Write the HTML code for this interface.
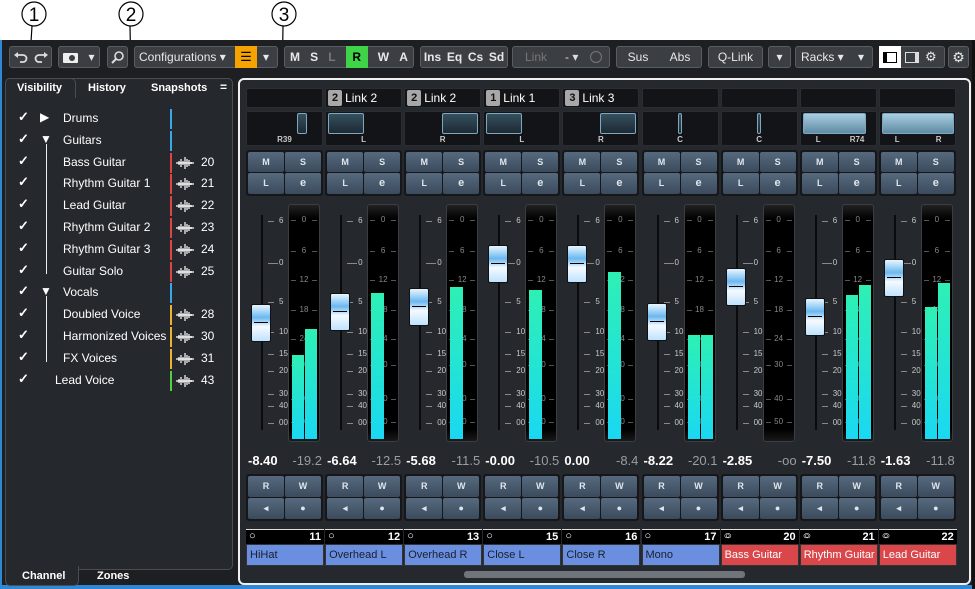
<!DOCTYPE html>
<html><head><meta charset="utf-8"><style>
*{box-sizing:border-box;margin:0;padding:0}
body{width:975px;height:589px;background:#fff;position:relative;overflow:hidden;font-family:"Liberation Sans",sans-serif;font-size:12px;color:#fff}
.a{position:absolute}
.tb{position:absolute;top:46px;height:22px;background:#3b3e43;border:1px solid #595c61;border-radius:3px;font-size:12px;color:#e8e8e8;display:flex;align-items:center;justify-content:center}
.bold{font-weight:bold}
.box{position:absolute;background:#121417;border:1px solid #2a2d31;border-radius:2px}
.btn4{position:absolute;border:1px solid #15171a;border-radius:3px;background:#15171a;display:grid;grid-template-columns:1fr 1fr;gap:1px;padding:1px}
.btn4 div{background:linear-gradient(#56697e,#3b4b5c);color:#dfe5ec;font-size:9px;font-weight:bold;display:flex;align-items:center;justify-content:center;border-radius:2px}
.lbl{position:absolute;font-size:8px;color:#c8c8c8}
</style></head><body>
<svg class="a" style="left:0;top:0" width="975" height="95">
<g fill="none" stroke="#000" stroke-width="1.2">
<circle cx="34" cy="14" r="12"/><circle cx="131" cy="14" r="12"/><circle cx="284" cy="14" r="12"/>
<line x1="32" y1="26" x2="31" y2="42"/><line x1="130" y1="26" x2="131" y2="80"/><line x1="283" y1="26" x2="282" y2="89"/></g>
<g fill="#000"><circle cx="31" cy="43" r="2.5"/><circle cx="131" cy="80" r="2.5"/><circle cx="282" cy="89" r="2.5"/></g>
<g font-family="Liberation Sans" font-size="19" text-anchor="middle"><text x="34" y="21">1</text><text x="131" y="21">2</text><text x="284" y="21">3</text></g>
</svg>
<div class="a" style="left:0;top:40px;width:975px;height:549px;background:#1d1f22"></div>
<div class="a" style="left:0;top:40px;width:2px;height:549px;background:#2f88d6"></div>
<div class="a" style="left:0;top:585px;width:975px;height:4px;background:#2f88d6"></div>
<div class="a" style="left:972px;top:40px;width:3px;height:549px;background:#111"></div>
<div class="tb" style="left:9px;width:43px"><svg width="36" height="14"><g fill="none" stroke="#ddd" stroke-width="1.8"><path d="M4 5h6a3.5 3.5 0 0 1 0 7H7"/><path d="M32 5h-6a3.5 3.5 0 0 0 0 7h3"/></g><path d="M1 5l4-3v6z M35 5l-4-3v6z" fill="#ddd"/></svg></div>
<div class="tb" style="left:58px;width:42px"><svg width="15" height="11"><rect x="0" y="1" width="15" height="10" rx="1" fill="#eee"/><circle cx="9" cy="6" r="3" fill="#3b3e43"/></svg>&nbsp;&nbsp;&nbsp;▾</div>
<div class="tb" style="left:107px;width:21px"><svg width="14" height="14"><circle cx="8" cy="6" r="4" fill="none" stroke="#ddd" stroke-width="1.6"/><path d="M5 9L1 13" stroke="#ddd" stroke-width="2"/></svg></div>
<div class="tb" style="left:134px;width:144px;justify-content:flex-start;padding-left:4px">Configurations&nbsp;▾<span style="position:absolute;left:100px;top:-1px;width:22px;height:22px;background:#f5a300;color:#000;text-align:center;font-size:13px;line-height:22px">☰</span><span style="position:absolute;left:128px">▾</span></div>
<div class="tb bold" style="left:284px;width:130px;justify-content:space-around">M<span>S</span><span style="color:#777">L</span><span style="background:#3fd447;color:#000;width:22px;text-align:center;line-height:22px">R</span><span>W</span><span>A</span></div>
<div class="tb bold" style="left:420px;width:88px;justify-content:space-around">Ins<span>Eq</span><span>Cs</span><span>Sd</span></div>
<div class="tb" style="left:512px;width:98px;color:#777;justify-content:flex-start;padding-left:12px">Link<span style="margin-left:18px;color:#ddd">-&nbsp;▾</span><span style="margin-left:12px;display:inline-block;width:12px;height:12px;border:1.5px solid #777;border-radius:50%"></span></div>
<div class="tb" style="left:616px;width:86px;justify-content:space-around">Sus<span>Abs</span></div>
<div class="tb" style="left:708px;width:55px">Q-Link</div>
<div class="tb" style="left:768px;width:23px">▾</div>
<div class="tb" style="left:795px;width:78px;justify-content:flex-start;padding-left:5px">Racks&nbsp;▾<span style="position:absolute;left:62px">▾</span></div>
<div class="tb" style="left:879px;width:66px;justify-content:flex-start">
<span style="background:#fff;width:22px;height:22px;margin-left:-1px;display:flex;align-items:center;justify-content:center"><span style="width:14px;height:11px;border:1.5px solid #000;border-left-width:4px"></span></span>
<span style="margin-left:4px;width:14px;height:11px;border:1.5px solid #ddd;border-right-width:4px"></span>
<span style="margin-left:6px;font-size:13px">⚙</span></div>
<div class="tb" style="left:948px;width:21px;font-size:14px">⚙</div>
<div class="a" style="left:5px;top:78px;width:228px;height:492px;background:#25282c;border:1px solid #4a4d52;border-radius:5px"></div>
<div class="a" style="left:5px;top:78px;width:71px;height:20px;background:#25282c;border:1px solid #4a4d52;border-bottom:none;border-radius:5px 5px 0 0"></div>
<div class="a bold" style="left:17px;top:82px;font-size:11px">Visibility</div>
<div class="a bold" style="left:88px;top:82px;font-size:11px">History</div>
<div class="a bold" style="left:151px;top:82px;font-size:11px">Snapshots</div>
<div class="a bold" style="left:220px;top:80px;font-size:12px">=</div>
<div class="a" style="left:5px;top:566px;width:74px;height:20px;background:#25282c;border:1px solid #4a4d52;border-top:none;border-radius:0 0 5px 5px"></div>
<div class="a bold" style="left:22px;top:570px;font-size:11px">Channel</div>
<div class="a bold" style="left:97px;top:570px;font-size:11px">Zones</div>
<div class="a" style="left:46px;top:144px;width:1px;height:130px;background:#eee"></div>
<div class="a" style="left:46px;top:296px;width:1px;height:66px;background:#eee"></div>
<div id="list"></div>
<div class="a" style="left:238px;top:78px;width:733px;height:507px;border:2px solid #f0f0f0;border-radius:6px;background:#25282c"></div>
<div class="a" style="left:464px;top:571px;width:281px;height:7px;background:#70757b;border-radius:3px"></div>
<div id="mix"></div>
<script>
var L=[["Drums",63,"#3aa7e8",null,"▶"],["Guitars",63,"#3aa7e8",null,"▼"],["Bass Guitar",63,"#e04444",20],["Rhythm Guitar 1",63,"#e04444",21],["Lead Guitar",63,"#e04444",22],["Rhythm Guitar 2",63,"#e04444",23],["Rhythm Guitar 3",63,"#e04444",24],["Guitar Solo",63,"#e04444",25],["Vocals",63,"#3aa7e8",null,"▼"],["Doubled Voice",63,"#f0b030",28],["Harmonized Voices",63,"#f0b030",30],["FX Voices",63,"#f0b030",31],["Lead Voice",55,"#50d040",43]];
var h="";
L.forEach(function(r,i){var y=109+i*21.8;
h+='<div class="a" style="left:18px;top:'+y+'px;font-size:13px;font-weight:bold">✓</div>';
if(r[4])h+='<div class="a" style="left:40px;top:'+(y+1)+'px;font-size:12px">'+r[4]+'</div>';
h+='<div class="a" style="left:'+r[1]+'px;top:'+(y+2)+'px;font-size:12px">'+r[0]+'</div>';
h+='<div class="a" style="left:170px;top:'+y+'px;width:2px;height:20px;background:'+r[2]+'"></div>';
if(r[3]){h+='<svg class="a" style="left:176px;top:'+(y+3)+'px" width="18" height="14"><path d="M0 7H18M3 5V9M5 3V11M7 5V9M9 1V13M11 3V11M13 4V10M15 6V8" stroke="#fff" stroke-width="1.2"/></svg>';
h+='<div class="a" style="left:201px;top:'+(y+2)+'px;font-size:12px">'+r[3]+'</div>';}
});
document.getElementById("list").innerHTML=h;
var S=[
{n:"",pan:"R39",cap:304,m:[355,329],v:"-8.40",p:"-19.2",num:11,nm:"HiHat",c:"#6b8fe0",st:0},
{n:"Link 2",lkn:2,pan:"L",cap:293,m:[293],v:"-6.64",p:"-12.5",num:12,nm:"Overhead L",c:"#6b8fe0",st:0},
{n:"Link 2",lkn:2,pan:"R",cap:288,m:[287],v:"-5.68",p:"-11.5",num:13,nm:"Overhead R",c:"#6b8fe0",st:0},
{n:"Link 1",lkn:1,pan:"L",cap:245,m:[290],v:"-0.00",p:"-10.5",num:15,nm:"Close L",c:"#6b8fe0",st:0},
{n:"Link 3",lkn:3,pan:"R",cap:245,m:[272],v:"0.00",p:"-8.4",num:16,nm:"Close R",c:"#6b8fe0",st:0},
{n:"",pan:"C",cap:303,m:[335,335],v:"-8.22",p:"-20.1",num:17,nm:"Mono",c:"#6b8fe0",st:0},
{n:"",pan:"C",cap:268,m:[],v:"-2.85",p:"-oo",num:20,nm:"Bass Guitar",c:"#d9474b",st:1},
{n:"",pan:"L|R74",cap:298,m:[295,285],v:"-7.50",p:"-11.8",num:21,nm:"Rhythm Guitar 1",c:"#d9474b",st:1},
{n:"",pan:"L|R",cap:259,m:[307,283],v:"-1.63",p:"-11.8",num:22,nm:"Lead Guitar",c:"#d9474b",st:1}];
var fs=[["6",221],["0",263],["5",302],["10",332],["15",354],["20",371],["30",394],["40",406],["00",423]];
var ms=[["0",220],["6",251],["12",280],["18",310],["24",339],["30",365],["40",399],["50",422]];
var o="";
S.forEach(function(s,i){var x=246+i*79.1;
o+='<div class="box" style="left:'+x+'px;top:88px;width:77px;height:20px"></div>';
if(s.n)o+='<div class="a" style="left:'+(x+3)+'px;top:90px;width:14px;height:16px;background:#a8a8a8;color:#111;font-size:11px;font-weight:bold;text-align:center;line-height:16px;border-radius:2px">'+s.lkn+'</div><div class="a" style="left:'+(x+20)+'px;top:91px;font-size:12px">'+s.n+'</div>';
o+='<div class="box" style="left:'+x+'px;top:111px;width:77px;height:35px"></div>';
var pw={"R39":[51,10],"L":[3,36],"R":[38,36],"C":[36,4],"L|R74":[3,63],"L|R":[3,72]}[s.pan];
var light=s.pan.indexOf("|")>0;
o+='<div class="a" style="left:'+(x+pw[0])+'px;top:113px;width:'+pw[1]+'px;height:21px;border-radius:2px;border:1px solid #7fa8c0;background:'+(light?'linear-gradient(#a8cde0,#5f8ba4)':'linear-gradient(#35505f,#1d2a33)')+'"></div>';
var pl=s.pan.split("|");
if(pl.length==2)o+='<div class="lbl bold" style="left:'+(x+16)+'px;top:135px">'+pl[0]+'</div><div class="lbl bold" style="left:'+(x+(s.pan=="L|R"?57:50))+'px;top:135px">'+pl[1]+'</div>';
else o+='<div class="lbl bold" style="left:'+x+'px;width:77px;text-align:center;top:135px">'+s.pan+'</div>';
o+='<div class="btn4" style="left:'+x+'px;top:150px;width:77px;height:46px"><div>M</div><div>S</div><div>L</div><div style="font-size:11px">e</div></div>';
o+='<div class="a" style="left:'+(x+15)+'px;top:215px;width:2px;height:215px;background:#0a0b0c"></div>';
fs.forEach(function(f){o+='<div class="a" style="left:'+(x+22)+'px;top:'+f[1]+'px;width:'+(f[0]=="0"?10:6)+'px;height:1px;background:#888"></div><div class="lbl" style="left:'+(x+33)+'px;top:'+(f[1]-5)+'px">'+f[0]+'</div>';});
o+='<div class="a" style="left:'+(x+42)+'px;top:204px;width:32px;height:238px;background:linear-gradient(#222 0,#000 14px,#000 224px,#1a1a1a);border:1px solid #3a3d42;border-radius:3px"></div>';
ms.forEach(function(f){o+='<div class="a" style="left:'+(x+45)+'px;top:'+f[1]+'px;width:5px;height:1px;background:#555"></div><div class="a" style="left:'+(x+66)+'px;top:'+f[1]+'px;width:5px;height:1px;background:#555"></div><div class="lbl" style="left:'+(x+42)+'px;width:32px;text-align:center;top:'+(f[1]-5)+'px;color:#888">'+f[0]+'</div>';});
s.m.forEach(function(t,j){var w=s.m.length==1?13:12;o+='<div class="a" style="left:'+(x+46+j*13)+'px;top:'+t+'px;width:'+w+'px;height:'+(439-t)+'px;background:linear-gradient(#2ef0b4,#1ad8f2)"></div>';});
o+='<div class="a" style="left:'+(x+5)+'px;top:'+s.cap+'px;width:20px;height:38px;border:1px solid #111;border-radius:2px;background:linear-gradient(#e8f6ff,#6ab8f0 35%,#f4faff 60%,#bfe3ff)"></div><div class="a" style="left:'+(x+8)+'px;top:'+(s.cap+18)+'px;width:14px;height:1px;background:#000"></div>';
o+='<div class="a bold" style="left:'+(x+2)+'px;top:453px;font-size:13px">'+s.v+'</div><div class="a" style="left:'+(x+42)+'px;width:34px;text-align:right;top:453px;font-size:13px;color:#9a9ea3">'+s.p+'</div>';
o+='<div class="btn4" style="left:'+x+'px;top:474px;width:77px;height:47px"><div>R</div><div>W</div><div>◂</div><div>●</div></div>';
o+='<div class="a" style="left:'+x+'px;top:529px;width:78px;height:15px;background:#000;border-top:1px solid #ddd"></div>';
o+='<div class="a" style="left:'+(x+3)+'px;top:530px;font-size:11px">'+(s.st?'<span style="letter-spacing:-5px">○○</span>':'○')+'</div><div class="a bold" style="left:'+(x+50)+'px;width:25px;text-align:right;top:531px;font-size:11px">'+s.num+'</div>';
o+='<div class="a" style="left:'+x+'px;top:544px;width:78px;height:22px;background:'+s.c+';border:1px solid #333;color:'+(s.st?'#fff':'#1a1f2c')+';font-size:11px;padding:4px 0 0 3px;white-space:nowrap;overflow:hidden">'+s.nm+'</div>';
});
document.getElementById("mix").innerHTML=o;
</script>
</body></html>
